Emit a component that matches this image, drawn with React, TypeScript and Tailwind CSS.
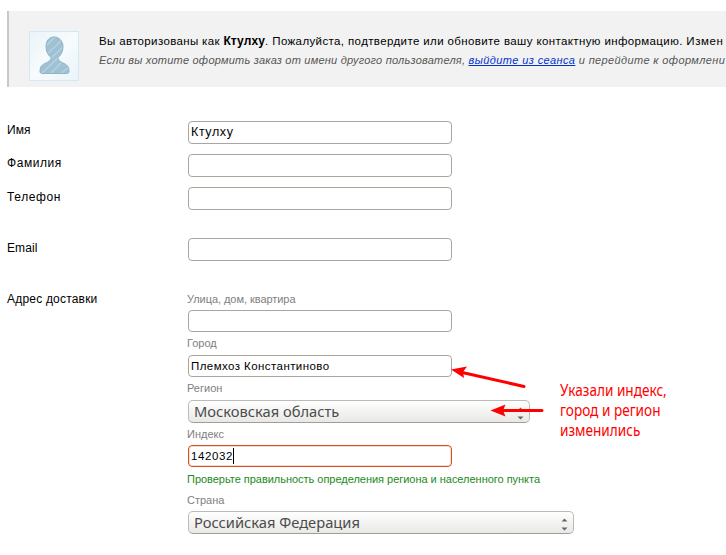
import type { ReactNode } from 'react';

function Label({ children, className = 'tracking-[0.2px]' }: { children: ReactNode; className?: string }) {
  return <div className={`w-[181px] shrink-0 whitespace-nowrap text-[12px] leading-4 text-black ${className}`}>{children}</div>;
}

function Field({ value = '', className = '' }: { value?: string; className?: string }) {
  return <div className={`flex w-[264px] items-center whitespace-nowrap rounded-[4px] border border-[#a9a6a0] bg-white pl-[2px] text-black ${className}`}>{value}</div>;
}

function Caption({ children, className = '', color = 'text-[#808080]' }: { children: ReactNode; className?: string; color?: string }) {
  return <div className={`-ml-px whitespace-nowrap text-[11px] leading-4 ${color} ${className}`}>{children}</div>;
}

function Select({ children, className = '' }: { children: ReactNode; className?: string }) {
  return (
    <div className={`flex h-[23px] items-center justify-between rounded-[5px] border border-[#bdbbb7] border-b-[#a19e98] bg-linear-to-b from-white to-[#e9e8e6] pl-[5px] pr-[5px] font-['Noto_Sans',sans-serif] text-[14.7px] text-[#4c4c4c] ${className}`}>
      {children}
      <svg width="7" height="13" viewBox="0 0 7 13" className="mt-[3px] fill-[#666]"><path d="M.5 3.500 3.500.5l3 3ZM.5 9.500l3 3 3-3Z" /></svg>
    </div>
  );
}

const PERSON = 'M25 6c-5 0-8 4-8 9.500 0 5 2 8.500 5 11 0 2.500-2 4-6 6-4 1.500-5 4.500-5 8 0 1.500 1 2 3 2h23c2 0 3-.5 3-2 0-3.500-1-6.500-5-8-4-2-6-3.500-6-6 3-2.500 5-6 5-11 0-5.500-4-9.500-9-9.500Z';

function Avatar() {
  return (
    <svg width="50" height="50" viewBox="0 0 50 50" className="mt-5 shrink-0">
      <defs>
        <linearGradient id="paper" x2="1" y2="1"><stop stopColor="#e9f4f9" /><stop offset=".5" stopColor="#f7fbfd" /><stop offset="1" stopColor="#e9f4f9" /></linearGradient>
        <clipPath id="person"><path d={PERSON} /></clipPath>
      </defs>
      <rect x=".5" y=".5" width="49" height="49" fill="url(#paper)" stroke="#d2e8f3" />
      <g clipPath="url(#person)">
        <path d="M0 0h50v50H0Z" fill="#9fc1d3" />
        <path d="m14 18 12-12M16 25 33 9M19 30l16-15M11 44l20-19M20 44l12-12M30 44l10-8" stroke="#b7d2df" strokeWidth="1.500" />
      </g>
      <path d={PERSON} fill="none" stroke="#8fb4c6" />
    </svg>
  );
}

export default function App() {
  return (
    <main className="relative h-[555px] w-[726px] overflow-hidden bg-white pl-[7px] pt-[11px] font-['Liberation_Sans',Arial,sans-serif]">
      <header className="flex h-[76px] overflow-hidden border-l-2 border-[#c8c8c8] bg-[#f2f2f2] pl-5">
        <Avatar />
        <div className="ml-5 mt-[21px] whitespace-nowrap text-[11px] leading-[19px]">
          <p className="text-black"><span className="text-[11.5px] tracking-[0.35px]">Вы авторизованы как </span><b className="text-[12px] tracking-[0.1px]">Ктулху</b><span className="text-[11.5px] tracking-[0.38px]">. Пожалуйста, подтвердите или обновите вашу контактную информацию. </span><span className="text-[11.5px] tracking-[0.6px]">Измен</span></p>
          <p className="italic text-[#555]"><span className="tracking-[0.22px]">Если вы хотите оформить заказ от имени другого пользователя, </span><a className="tracking-[0.4px] text-[#0033cc] underline">выйдите из сеанса</a><span className="tracking-[0.36px]"> и перейдите к оформлени</span></p>
        </div>
      </header>
      <form className="pt-[34px]">
        <div className="flex h-[33px]"><Label className="mt-px tracking-normal">Имя</Label><Field value="Ктулху" className="h-[23px] text-[12.5px] tracking-[0.6px]" /></div>
        <div className="flex h-[33px]"><Label className="mt-px tracking-[0.55px]">Фамилия</Label><Field className="h-[23px]" /></div>
        <div className="flex h-[51px]"><Label className="mt-[2px] tracking-[0.6px]">Телефон</Label><Field className="h-[23px]" /></div>
        <div className="flex h-[53px]"><Label className="mt-[2px] tracking-[0.1px]">Email</Label><Field className="h-[23px]" /></div>
        <div className="flex">
          <Label>Адрес доставки</Label>
          <div>
            <Caption className="mb-[3px] tracking-[-0.05px]">Улица, дом, квартира</Caption>
            <Field className="h-[22px]" />
            <Caption className="mb-1 mt-[3px]">Город</Caption>
            <Field value="Племхоз Константиново" className="h-[22px] pt-px text-[11.5px] tracking-[0.43px]" />
            <Caption className="mb-1 mt-[3px]">Регион</Caption>
            <Select className="w-[342px]">Московская область</Select>
            <Caption className="mb-[3px] mt-[3px]">Индекс</Caption>
            <div className="flex h-[22px] w-[264px] items-center rounded-[4px] border border-[#cf5328] pl-[2px] text-[11.5px] text-black shadow-[inset_0_0_0_1px_#f8ddd2]"><span className="pt-px tracking-[0.6px]">142032</span><i className="h-4 w-px bg-black" /></div>
            <Caption className="mt-1 tracking-[-0.025px]" color="text-[#218a21]">Проверьте правильность определения региона и населенного пункта</Caption>
            <Caption className="mb-[3px] mt-[5px]">Страна</Caption>
            <Select className="w-[386px]">Российская Федерация</Select>
          </div>
        </div>
      </form>
      <svg className="absolute left-[445px] top-[360px]" width="110" height="65" viewBox="0 0 110 65">
        <path d="M79 26.500 15 12M97 50.500H54" stroke="red" strokeWidth="3" strokeLinecap="round" />
        <path d="m6 9.500 16-3-4 5.500 1 6ZM45.500 50.500l15-6-2.500 6 2.500 6Z" fill="red" />
      </svg>
      <p className="absolute left-[560px] top-[380px] origin-left scale-x-[.85] whitespace-nowrap font-['Noto_Sans',sans-serif] text-[16px] leading-5 text-[#ff0000]">Указали индекс,<br />город и регион<br />изменились</p>
    </main>
  );
}
